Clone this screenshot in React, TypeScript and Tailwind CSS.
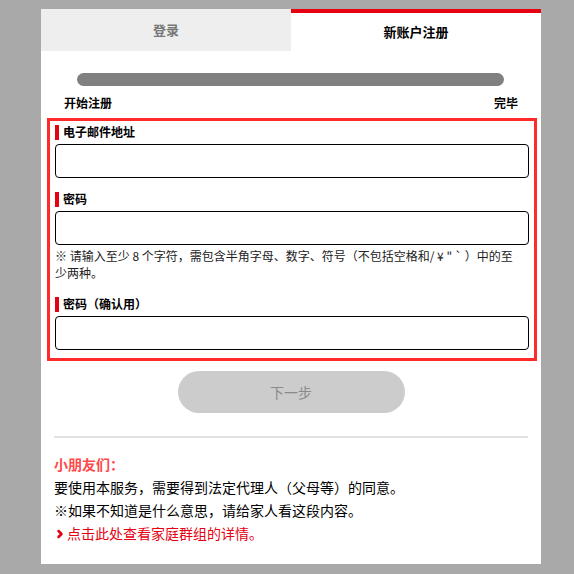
import { ChevronRight } from "lucide-react";

const font = "font-['Noto_Sans_CJK_SC','Noto_Sans',sans-serif]";

function FieldLabel({ text }: { text: string }) {
  return (
    <div className="flex items-center h-[16px]">
      <span className="w-[4px] h-[15px] bg-[#e60012] mr-[4px]" />
      <span className="text-[12px] font-bold text-black leading-none">{text}</span>
    </div>
  );
}

function Input() {
  return <div className="mt-[4px] h-[34px] rounded-[4px] border border-black bg-white" />;
}

export default function App() {
  return (
    <div className={`${font} min-h-[574px] bg-[#a9a9a9] pt-[9px] pl-[41px]`}>
      <div className="w-[500px] h-[555px] bg-white">
        {/* Tabs */}
        <div className="grid grid-cols-2 h-[42px]">
          <div className="flex items-center justify-center bg-[#eeeeee] text-[13px] font-bold text-[#777777]">
            登录
          </div>
          <div className="flex items-center justify-center border-t-4 border-[#e60012] text-[13px] font-bold text-black">
            新账户注册
          </div>
        </div>

        {/* Progress */}
        <div className="mt-[22px] ml-[36px] mr-[37px] h-[13px] rounded-full bg-[#808080]" />
        <div className="flex justify-between px-[23px] mt-[10px] text-[12px] font-semibold text-black leading-[14px]">
          <span>开始注册</span>
          <span>完毕</span>
        </div>

        {/* Form */}
        <div className="mt-[8px] ml-[6px] mr-[4px] border-[3px] border-[#ff2b2b] px-[5px] pt-[3px] pb-[8px]">
          <FieldLabel text="电子邮件地址" />
          <Input />
          <div className="mt-[13px]">
            <FieldLabel text="密码" />
            <Input />
          </div>
          <p className="mt-[2px] text-[12px] leading-[17px] text-[#222222]">
            ※ 请输入至少 8 个字符，需包含半角字母、数字、符号（不包括空格和/ ¥ " ` ）中的至
            <br />
            少两种。
          </p>
          <div className="mt-[15px]">
            <FieldLabel text="密码（确认用）" />
            <Input />
          </div>
        </div>

        {/* Button */}
        <button className="block mx-auto mt-[10px] w-[227px] h-[42px] rounded-full bg-[#cccccc] text-[14px] text-[#8a8a8a]">
          下一步
        </button>

        <div className="mt-[23px] mx-[13px] h-[2px] bg-[#e2e2e2]" />

        {/* Notice */}
        <div className="px-[13px] pt-[15px] text-[14px] leading-[23px] text-black">
          <p className="font-bold text-[#ff4a4a]">小朋友们：</p>
          <p>要使用本服务，需要得到法定代理人（父母等）的同意。</p>
          <p>※如果不知道是什么意思，请给家人看这段内容。</p>
          <p className="flex items-center text-[#e60012]">
            <ChevronRight size={12} strokeWidth={5} className="mr-[1px]" />
            点击此处查看家庭群组的详情。
          </p>
        </div>
      </div>
    </div>
  );
}
